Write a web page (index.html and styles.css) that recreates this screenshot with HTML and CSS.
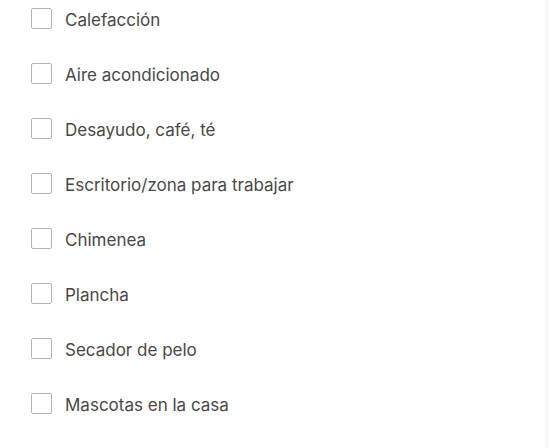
FILE: index.html
```html
<!DOCTYPE html>
<html lang="es">
<head>
<meta charset="utf-8">
<link rel="stylesheet" href="styles.css">
</head>
<body>
<div class="page">
  <ul class="list">
    <li class="item"><span class="box"></span><span class="label">Calefacción</span></li>
    <li class="item"><span class="box"></span><span class="label">Aire acondicionado</span></li>
    <li class="item"><span class="box"></span><span class="label">Desayudo, café, té</span></li>
    <li class="item"><span class="box"></span><span class="label">Escritorio/zona para trabajar</span></li>
    <li class="item"><span class="box"></span><span class="label">Chimenea</span></li>
    <li class="item"><span class="box"></span><span class="label">Plancha</span></li>
    <li class="item"><span class="box"></span><span class="label">Secador de pelo</span></li>
    <li class="item"><span class="box"></span><span class="label">Mascotas en la casa</span></li>
  </ul>
  <div class="scroll"></div>
</div>
</body>
</html>
```

FILE: styles.css
```css
html, body {
  margin: 0;
  padding: 0;
  background: #ffffff;
}
.page {
  display: flex;
  height: 448px;
  overflow: hidden;
}
.list {
  flex: 1;
  list-style: none;
  margin: 0;
  padding: 8px 0 0 31px;
  display: flex;
  flex-direction: column;
  gap: 34px;
  font-family: Inter, "Liberation Sans", sans-serif;
  font-size: 17px;
  color: #484848;
}
.item {
  display: flex;
  align-items: center;
  height: 21px;
}
.box {
  width: 19px;
  height: 19px;
  border: 1px solid #b4b4b4;
  border-radius: 2px;
  background: #fff;
  flex: none;
}
.label {
  margin-left: 13px;
  line-height: 21px;
  position: relative;
  top: 2px;
}
.scroll {
  width: 4px;
  background: #f8f8f8;
  flex: none;
}
```
